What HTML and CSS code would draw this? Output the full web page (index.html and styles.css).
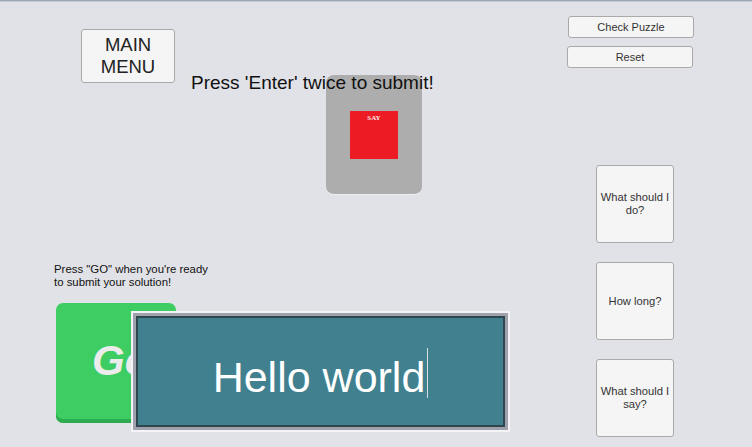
FILE: index.html
```html
<!DOCTYPE html>
<html>
<head>
<meta charset="utf-8">
<link rel="stylesheet" href="styles.css">
</head>
<body>
<div class="stage">
  <div class="left">
    <div class="top-row">
      <button class="btn menu-btn">MAIN<br>MENU</button>
      <div class="enter-hint">Press 'Enter' twice to submit!</div>
    </div>
    <div class="card"><div class="say"><span>SAY</span></div></div>
    <div class="go-hint">Press "GO" when you're ready<br>to submit your solution!</div>
    <div class="go-row">
      <div class="go-btn"><span>Go</span></div>
      <div class="input-frame">
        <div class="field"><span class="field-text">Hello world</span><span class="caret"></span></div>
      </div>
    </div>
  </div>
  <div class="right">
    <button class="btn small-btn check">Check Puzzle</button>
    <button class="btn small-btn reset">Reset</button>
    <div class="questions">
      <button class="btn q-btn">What should I do?</button>
      <button class="btn q-btn">How long?</button>
      <button class="btn q-btn">What should I say?</button>
    </div>
  </div>
</div>
</body>
</html>
```
FILE: styles.css
```css
* { box-sizing: border-box; }
html, body { margin: 0; padding: 0; }
body {
  width: 752px;
  height: 447px;
  overflow: hidden;
  background: #e1e2e7;
  border-top: 1px solid #9ca6b5;
  font-family: "Liberation Sans", Arial, sans-serif;
}
.stage {
  display: flex;
  height: 446px;
  border-top: 1px solid #c3c9d2;
}
.left {
  flex: 0 0 567px;
  position: relative;
  display: flex;
  flex-direction: column;
}
.btn {
  font-family: "Liberation Sans", Arial, sans-serif;
  background: #f5f5f5;
  border: 1px solid #a9a9a9;
  border-radius: 3px;
  color: #333;
  padding: 0;
  margin: 0;
  text-align: center;
}
.top-row {
  display: flex;
  align-items: flex-start;
  padding: 27px 0 0 81px;
  position: relative;
  z-index: 2;
}
.menu-btn {
  width: 94px;
  height: 54px;
  font-size: 18.5px;
  line-height: 22px;
  color: #222;
}
.enter-hint {
  margin: 43px 0 0 16px;
  font-size: 19px;
  line-height: 22px;
  color: #111;
  white-space: nowrap;
}
.card {
  position: absolute;
  left: 326px;
  top: 73px;
  width: 96px;
  height: 120px;
  background: #adadad;
  border-radius: 8px;
  border-bottom: 1px solid #f0f0f0;
  padding: 36px 0 0 24px;
  z-index: 1;
}
.say {
  width: 48px;
  height: 48px;
  background: #ed1b24;
  display: flex;
  justify-content: center;
  padding-top: 3px;
}
.say span {
  font-family: "Liberation Serif", serif;
  font-weight: bold;
  font-size: 7px;
  line-height: 8px;
  color: #fbe9ea;
}
.go-hint {
  margin: 169px 0 0 54px;
  font-size: 11.4px;
  line-height: 12.5px;
  color: #111;
}
.go-row {
  display: flex;
  align-items: flex-start;
  margin-top: 15px;
  padding-left: 56px;
}
.go-btn {
  flex: 0 0 120px;
  height: 120px;
  background: #3ecd62;
  border-radius: 7px;
  box-shadow: inset 0 -4px 0 #30ac50;
  display: flex;
  align-items: center;
  padding: 0 0 4px 36px;
}
.go-btn span {
  font-size: 42px;
  font-weight: bold;
  font-style: italic;
  color: #ececec;
}
.input-frame {
  flex: 0 0 379px;
  height: 121px;
  margin: 8px 0 0 -45px;
  background: #9fa2ad;
  border: 2px solid #f4f4f7;
  padding: 3px;
}
.field {
  height: 100%;
  background: #40808f;
  border: 2px solid #2f464e;
  display: flex;
  align-items: center;
  justify-content: center;
  padding-top: 10px;
}
.field-text {
  font-size: 43px;
  line-height: 48px;
  color: #ffffff;
}
.caret {
  width: 1px;
  height: 50px;
  background: #d8dde0;
  margin: 0 0 8px 2px;
}
.right {
  flex: 0 0 185px;
  display: flex;
  flex-direction: column;
  align-items: flex-start;
  padding-top: 14px;
}
.small-btn {
  width: 126px;
  height: 22px;
  font-size: 11px;
}
.check { margin-left: 1px; }
.reset { margin-top: 8px; }
.questions {
  display: flex;
  flex-direction: column;
  gap: 19px;
  margin: 97px 0 0 29px;
}
.q-btn {
  width: 78px;
  height: 78px;
  font-size: 11.2px;
  line-height: 13px;
  padding: 0 2px;
}
```
